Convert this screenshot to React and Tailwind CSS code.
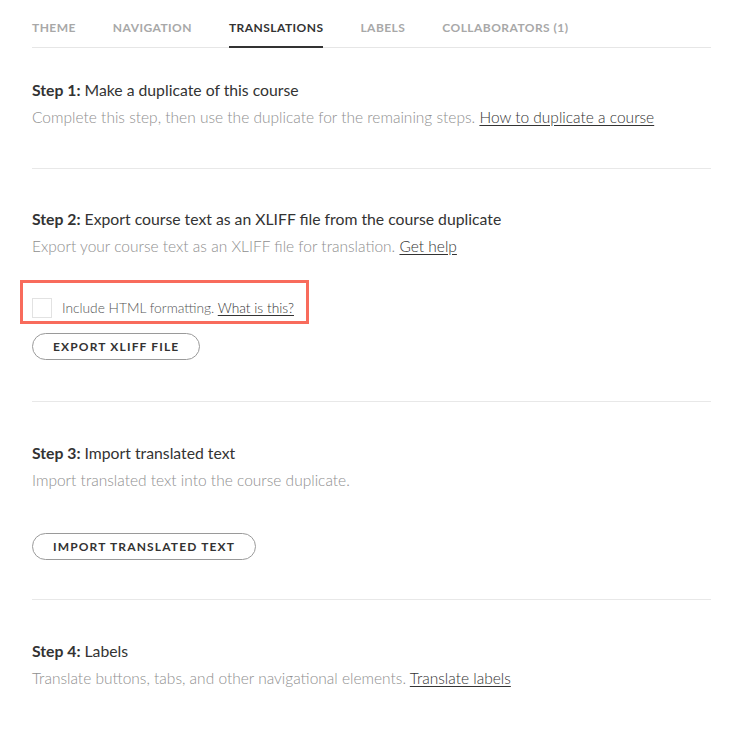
import React from "react";

const font = { fontFamily: "Lato, 'Open Sans', sans-serif" };

function Tabs() {
  const tabs = ["THEME", "NAVIGATION", "TRANSLATIONS", "LABELS", "COLLABORATORS (1)"];
  return (
    <div className="flex gap-[37px] border-b border-[#e6e6e6] h-[48px]">
      {tabs.map((t) => {
        const active = t === "TRANSLATIONS";
        return (
          <div
            key={t}
            className={
              "pt-[20px] text-[12px] leading-[16px] font-bold tracking-[0.45px] h-[48px] " +
              (active
                ? "text-[#333333] border-b-2 border-[#333333]"
                : "text-[#a8a8a8]")
            }
          >
            {t}
          </div>
        );
      })}
    </div>
  );
}

function Heading({ n, children }) {
  return (
    <div className="text-[15.75px] leading-[24px] text-[#333333]">
      <span className="font-bold">Step {n}:</span> {children}
    </div>
  );
}

function Desc({ children }) {
  return (
    <div className="mt-[3px] text-[15.5px] leading-[24px] font-light text-[#8f8f8f]">
      {children}
    </div>
  );
}

function Link({ children }) {
  return <span className="underline text-[#333333] underline-offset-2">{children}</span>;
}

function Pill({ children, className = "" }) {
  return (
    <button
      className={
        "h-[27px] rounded-full border border-[#9a9a9a] bg-white px-[20px] text-[12px] font-bold tracking-[1.15px] text-[#333333] " +
        className
      }
    >
      {children}
    </button>
  );
}

export default function App() {
  return (
    <div className="bg-white w-[743px] min-h-[742px]" style={font}>
      <div className="mx-[32px]">
        <Tabs />
        <section className="pt-[30px] pb-[39px] border-b border-[#e8e8e8]">
          <Heading n={1}>Make a duplicate of this course</Heading>
          <Desc>
            Complete this step, then use the duplicate for the remaining steps.{" "}
            <Link>How to duplicate a course</Link>
          </Desc>
        </section>
        <section className="pt-[38px] pb-[41px] border-b border-[#e8e8e8]">
          <Heading n={2}>Export course text as an XLIFF file from the course duplicate</Heading>
          <Desc>
            Export your course text as an XLIFF file for translation. <Link>Get help</Link>
          </Desc>
          <div className="-ml-[12px] mt-[22px] w-[289px] h-[44px] border-[3px] border-[#f86b5c] pl-[9px] pt-[15px] flex items-start">
            <div className="w-[20px] h-[20px] border border-[#e2e2e2] bg-white shrink-0" />
            <div className="ml-[10px] text-[13.75px] leading-[20px] font-light text-[#555555]">
              Include HTML formatting. <Link>What is this?</Link>
            </div>
          </div>
          <Pill className="mt-[9px]">EXPORT XLIFF FILE</Pill>
        </section>
        <section className="pt-[39px] pb-[39px] border-b border-[#e8e8e8]">
          <Heading n={3}>Import translated text</Heading>
          <Desc>Import translated text into the course duplicate.</Desc>
          <Pill className="mt-[41px] h-[25px]">IMPORT TRANSLATED TEXT</Pill>
        </section>
        <section className="pt-[39px]">
          <Heading n={4}>Labels</Heading>
          <Desc>
            Translate buttons, tabs, and other navigational elements. <Link>Translate labels</Link>
          </Desc>
        </section>
      </div>
    </div>
  );
}
